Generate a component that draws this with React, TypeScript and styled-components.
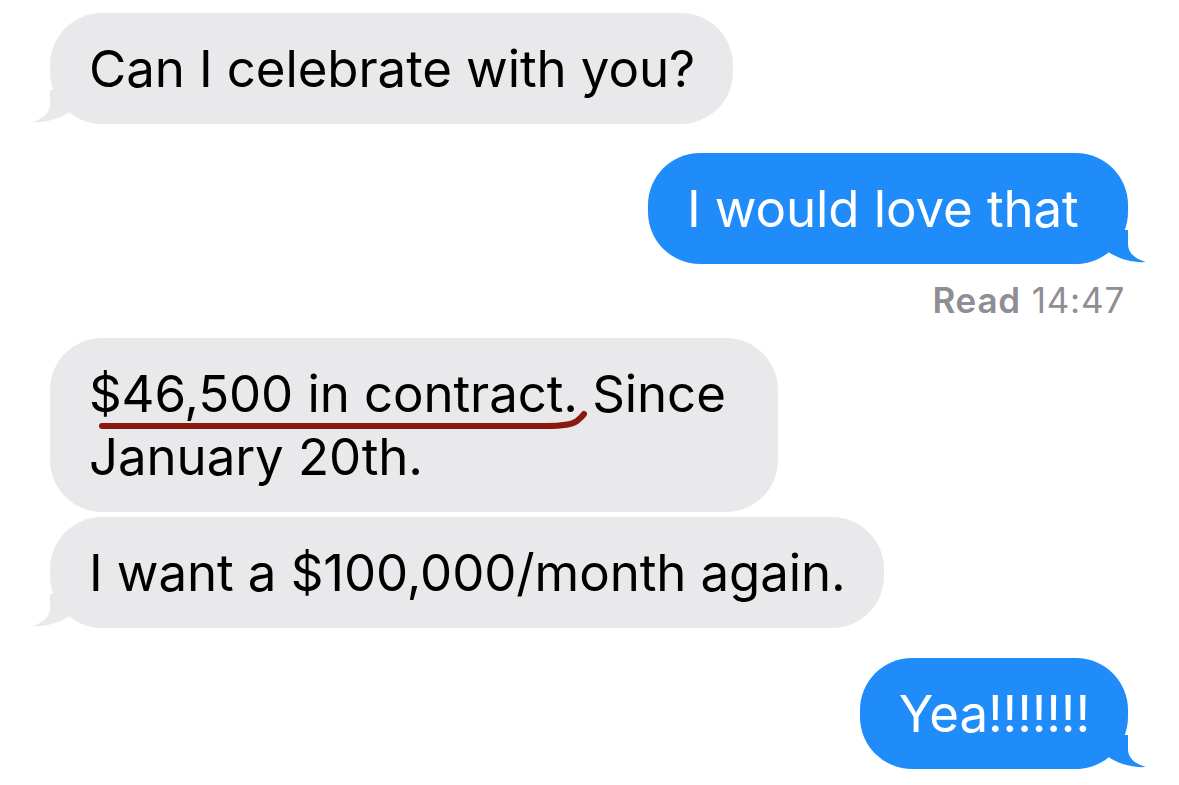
import styled, { createGlobalStyle } from "styled-components"

const GRAY = "#e9e9eb"
const BLUE = "#1f8cfa"

type Side = "in" | "out"

const GlobalStyle = createGlobalStyle`
  html, body {
    margin: 0;
    padding: 0;
    background: #ffffff;
  }
  body {
    font-family: "Inter", "Noto Sans", "Liberation Sans", sans-serif;
    -webkit-font-smoothing: antialiased;
  }
`

const Thread = styled.div`
  display: flex;
  flex-direction: column;
  width: 1179px;
  height: 785px;
  overflow: hidden;
  box-sizing: border-box;
  padding: 0 51px 0 50px;
`

const Row = styled.div<{ $side: Side; $gap: number }>`
  display: flex;
  flex-direction: column;
  align-items: ${(p) => (p.$side === "in" ? "flex-start" : "flex-end")};
  margin-top: ${(p) => p.$gap}px;
`

const Bubble = styled.div<{ $side: Side; $width?: number }>`
  position: relative;
  box-sizing: border-box;
  ${(p) => (p.$width ? `width: ${p.$width}px;` : "")}
  padding: 24px 38px 24px 39px;
  border-radius: 52px;
  font-size: 51px;
  line-height: 63px;
  letter-spacing: -0.1px;
  background: ${(p) => (p.$side === "in" ? GRAY : BLUE)};
  color: ${(p) => (p.$side === "in" ? "#000000" : "#ffffff")};
  white-space: nowrap;
`

const TailShape = styled.svg<{ $side: Side }>`
  position: absolute;
  bottom: 0;
  ${(p) => (p.$side === "in" ? "left: -18px;" : "right: -18px; transform: scaleX(-1);")}
  display: block;
`

const Marked = styled.span`
  position: relative;
  display: inline-block;
`

const Scribble = styled.svg`
  position: absolute;
  left: 10px;
  top: 49px;
  width: calc(100% - 2px);
  height: 20px;
  overflow: visible;
`

const Receipt = styled.div`
  margin: 16px 3px 18px 0;
  font-size: 35px;
  line-height: 40px;
  letter-spacing: 0.8px;
  color: #8e8e93;

  strong {
    font-weight: 600;
  }
`

interface Message {
  id: number
  side: Side
  text: React.ReactNode
  tail?: boolean
  width?: number
  gap: number
  receipt?: { label: string; time: string }
}

const messages: Message[] = [
  { id: 1, side: "in", text: "Can I celebrate with you?", tail: true, gap: 13 },
  {
    id: 2,
    side: "out",
    text: "I would love that",
    tail: true,
    width: 480,
    gap: 29,
    receipt: { label: "Read", time: "14:47" },
  },
  {
    id: 3,
    side: "in",
    width: 728,
    text: (
      <>
        <Marked>
          $46,500 in contract.
          <Scribble viewBox="0 0 490 20" preserveAspectRatio="none">
            <path
              d="M3 15 L450 15 Q474 15 481 10 Q486 6 488 3"
              fill="none"
              stroke="#8a1a0f"
              strokeWidth="6"
              strokeLinecap="round"
              vectorEffect="non-scaling-stroke"
            />
          </Scribble>
        </Marked>{" "}
        Since
        <br />
        January 20th.
      </>
    ),
    gap: 0,
  },
  { id: 4, side: "in", text: "I want a $100,000/month again.", tail: true, gap: 5 },
  { id: 5, side: "out", text: "Yea!!!!!!!", tail: true, gap: 30 },
]

function Tail({ side }: { side: Side }) {
  return (
    <TailShape $side={side} viewBox="0 0 80 34" width="80" height="34">
      <path
        d="M18 0 L18 14 C18 23 11 29 0 32 C 13 33 28 29 39 21 C 49 30 60 34 75 34 L75 0 Z"
        fill={side === "in" ? GRAY : BLUE}
      />
    </TailShape>
  )
}

export default function App() {
  return (
    <>
      <GlobalStyle />
      <Thread>
        {messages.map((m) => (
          <Row key={m.id} $side={m.side} $gap={m.gap}>
            <Bubble $side={m.side} $width={m.width}>
              {m.text}
              {m.tail && <Tail side={m.side} />}
            </Bubble>
            {m.receipt && (
              <Receipt>
                <strong>{m.receipt.label}</strong> {m.receipt.time}
              </Receipt>
            )}
          </Row>
        ))}
      </Thread>
    </>
  )
}
